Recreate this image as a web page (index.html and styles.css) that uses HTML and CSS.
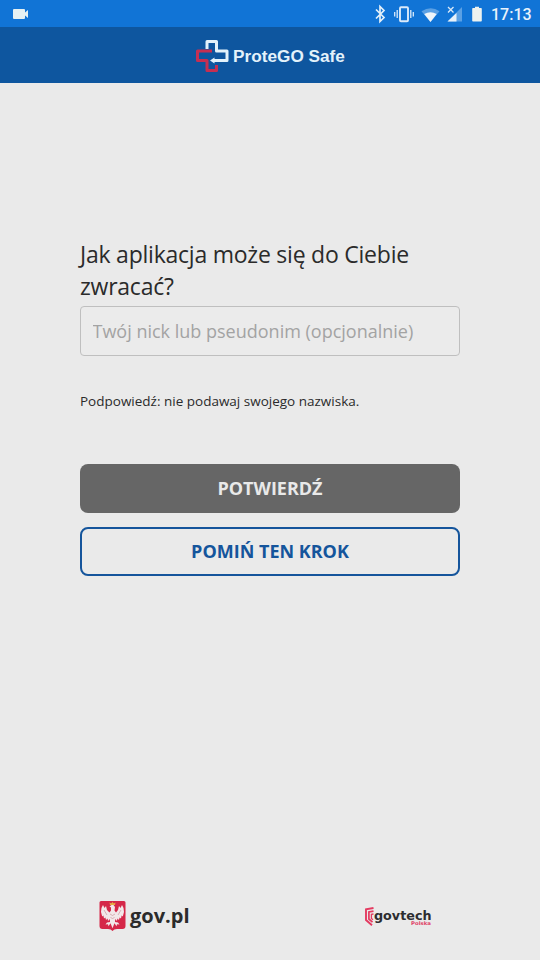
FILE: index.html
```html
<!DOCTYPE html>
<html lang="pl">
<head>
<meta charset="utf-8">
<title>ProteGO Safe</title>
<link rel="stylesheet" href="styles.css">
</head>
<body>
<div class="screen">
  <div class="status">
    <svg class="camera" width="16" height="12" viewBox="0 0 16 12"><path fill="#e6f1f3" d="M1 1h10q1 0 1 1v2.600l3-2.600v8l-3-2.600v2.600q0 1-1 1H1q-1 0-1-1V2q0-1 1-1z"/></svg>
    <svg class="indicators" width="114" height="20" viewBox="0 0 114 20">
      <path d="M2 5.500l8 8-4 4V2.500l4 4-8 8" fill="none" stroke="#e4f0fa" stroke-width="1.700"/>
      <g fill="none" stroke="#dbeafa"><rect x="26" y="3.200" width="8" height="14" rx="1" stroke-width="1.900"/><path d="M23.200 6v8M20.700 8v4.500M36.800 6v8M39.300 8v4.500" stroke-width="1.300"/></g>
      <path d="M47.500 7.300q9.500-6.300 18 0L56.500 18z" fill="#5ba0e4"/>
      <path d="M50.200 10q6.300-3.500 12.500 0L56.500 18z" fill="#f0f5fa"/>
      <path d="M88 3v14.500H73.500z" fill="#5ba0e4"/>
      <path d="M82.500 9v8.500H73.500z" fill="#e8f1fa"/>
      <path d="M74 3l5.500 5.500M79.500 3L74 8.500" fill="none" stroke="#d9e9f8" stroke-width="1.300"/>
      <path d="M99 4h2V2.700h4V4h2q.8 0 .8.800v12q0 .8-.8.800h-8q-.8 0-.8-.8v-12q0-.8.800-.8z" fill="#edf2ef"/>
    </svg>
    <span class="clock">17:13</span>
  </div>
  <header class="appbar">
    <svg class="cross" width="34" height="34" viewBox="0 0 34 34">
      <g fill="none" stroke-width="3" stroke-linejoin="round">
        <path stroke="#c52f52" d="M17 12H2.500v9.500H12v10h9.500V26"/>
        <path stroke="#e3f2fb" d="M12 10V2.500h9.500V12H32v9.500H18"/>
      </g>
      <path fill="#e3f2fb" d="M15 21.500l4.500-3v6z"/>
    </svg>
    <span class="brand">ProteGO Safe</span>
  </header>
  <main class="form">
    <label class="question" for="nick">Jak aplikacja może się do Ciebie<br>zwracać?</label>
    <input class="nick" id="nick" placeholder="Twój nick lub pseudonim (opcjonalnie)">
    <p class="hint">Podpowiedź: nie podawaj swojego nazwiska.</p>
    <button class="button confirm">POTWIERDŹ</button>
    <button class="button skip">POMIŃ TEN KROK</button>
  </main>
  <footer class="partners">
    <div class="gov">
      <svg width="27" height="32" viewBox="0 0 27 32">
        <path fill="#d52748" d="M2 1h23q1.500 0 1.500 1.500V26q0 3-3 3H18q-3 0-4.500 2Q12 29 9 29H3.500q-3 0-3-3V2.500Q.5 1 2 1z"/>
        <path fill="#f2e8e9" d="M4 5Q1.700 8 2 12l1.200 4.500 1.200-1 .6 3 1.400-1 .6 2.500 1.600-1.500.4 2.500 1.800-2L11 22l-3 .5-1.500 2 2.500-.3.500 2 2-3 .8 2 1.200 3 1.200-3 .8-2 2 3 .5-2 2.500.3-1.500-2-3-.5.200-3 1.800 2 .4-2.500 1.600 1.500.6-2.500 1.400 1 .6-3 1.200 1L25 12q.3-4-2-7l-1.500 3-1.500-2-1 4-2 2.500-1.500-2 .5-3.500-1.500-2h-2l-2 1.500 1.500 1v3l-1.500 2L8 10 7 6 5.500 8z"/>
        <path fill="#e6ae43" d="M11 5l-.5-2.500 1.700 1L13.500 2l1.300 1.500 1.700-1L16 5z"/>
        <path fill="none" stroke="#c78b92" stroke-width=".6" d="M5 10l3 5M22 10l-3 5M11 14l2.500 1.500L16 14M11.500 17.500l2 1 2-1"/>
      </svg>
      <span class="govname">gov.pl</span>
    </div>
    <svg class="govtech" width="70" height="26" viewBox="0 0 70 26">
      <g fill="none" stroke="#e43b61"><path stroke-width="1.900" d="M9.500 5L2 6.300V17l6 5.300"/><path stroke-width="1.700" d="M9.500 8.200L4.900 9v7l3.600 3.200"/><path stroke-width="1.300" d="M9.500 11L7.400 11.400v4l1.600 1.300"/></g>
      <text class="tech" x="10" y="17" textLength="57.500" lengthAdjust="spacingAndGlyphs">govtech</text>
      <text class="country" x="47" y="22" textLength="20" lengthAdjust="spacingAndGlyphs">Polska</text>
    </svg>
  </footer>
</div>
</body>
</html>
```
FILE: styles.css
```css
* { box-sizing: border-box; }
body { margin: 0; background: #eaeaea; font-family: "Open Sans", sans-serif; color: #2b2b2b; }
.screen { height: 960px; display: flex; flex-direction: column; }
.status { height: 27px; flex: none; display: flex; align-items: center; padding: 0 9px 0 13px; background: #1174d6; }
.indicators { margin-left: auto; margin-right: 3px; }
.clock { width: 40px; font: 500 16px/27px Roboto, sans-serif; color: #e8f2fb; white-space: nowrap; padding-top: 1px; }
.appbar { height: 56px; flex: none; display: flex; align-items: center; justify-content: center; gap: 4px; background: #0e569f; }
.cross { flex: none; margin-top: 1px; }
.brand { font: bold 17.200px/24px "Liberation Sans", sans-serif; color: #e3f2fb; white-space: nowrap; padding-top: 2px; }
.form { flex: 1; display: flex; flex-direction: column; padding: 156px 80px 0; }
.question { font-size: 23px; letter-spacing: -.23px; line-height: 31.500px; height: 67px; white-space: nowrap; }
.nick { height: 50px; flex: none; width: 100%; border: 1px solid #bfbfbf; border-radius: 4px; background: #ebebeb; padding: 0 11.500px; font: 18px "Open Sans", sans-serif; }
.nick::placeholder { color: #a3a3a3; opacity: 1; }
.hint { margin: 35px 0 53px; font-size: 13.500px; line-height: 20px; white-space: nowrap; }
.button { height: 49px; flex: none; width: 100%; border: 0; border-radius: 8px; font: bold 18px "Open Sans", sans-serif; padding: 0 0 1px; }
.confirm { background: #666; color: #e9e9e9; }
.skip { margin-top: 14px; border: 2px solid #15559c; background: #eaeaea; color: #15559c; }
.partners { display: flex; justify-content: space-between; align-items: center; padding: 0 106px 28px 99px; }
.gov { display: flex; align-items: center; gap: 4px; }
.govname { font-size: 20px; line-height: 32px; font-weight: bold; padding-top: 1px; }
.govtech { overflow: visible; }
.tech { font: bold 13px "DejaVu Sans", sans-serif; fill: #2d2d30; }
.country { font: bold 5px "DejaVu Sans", sans-serif; fill: #df4166; }
```
